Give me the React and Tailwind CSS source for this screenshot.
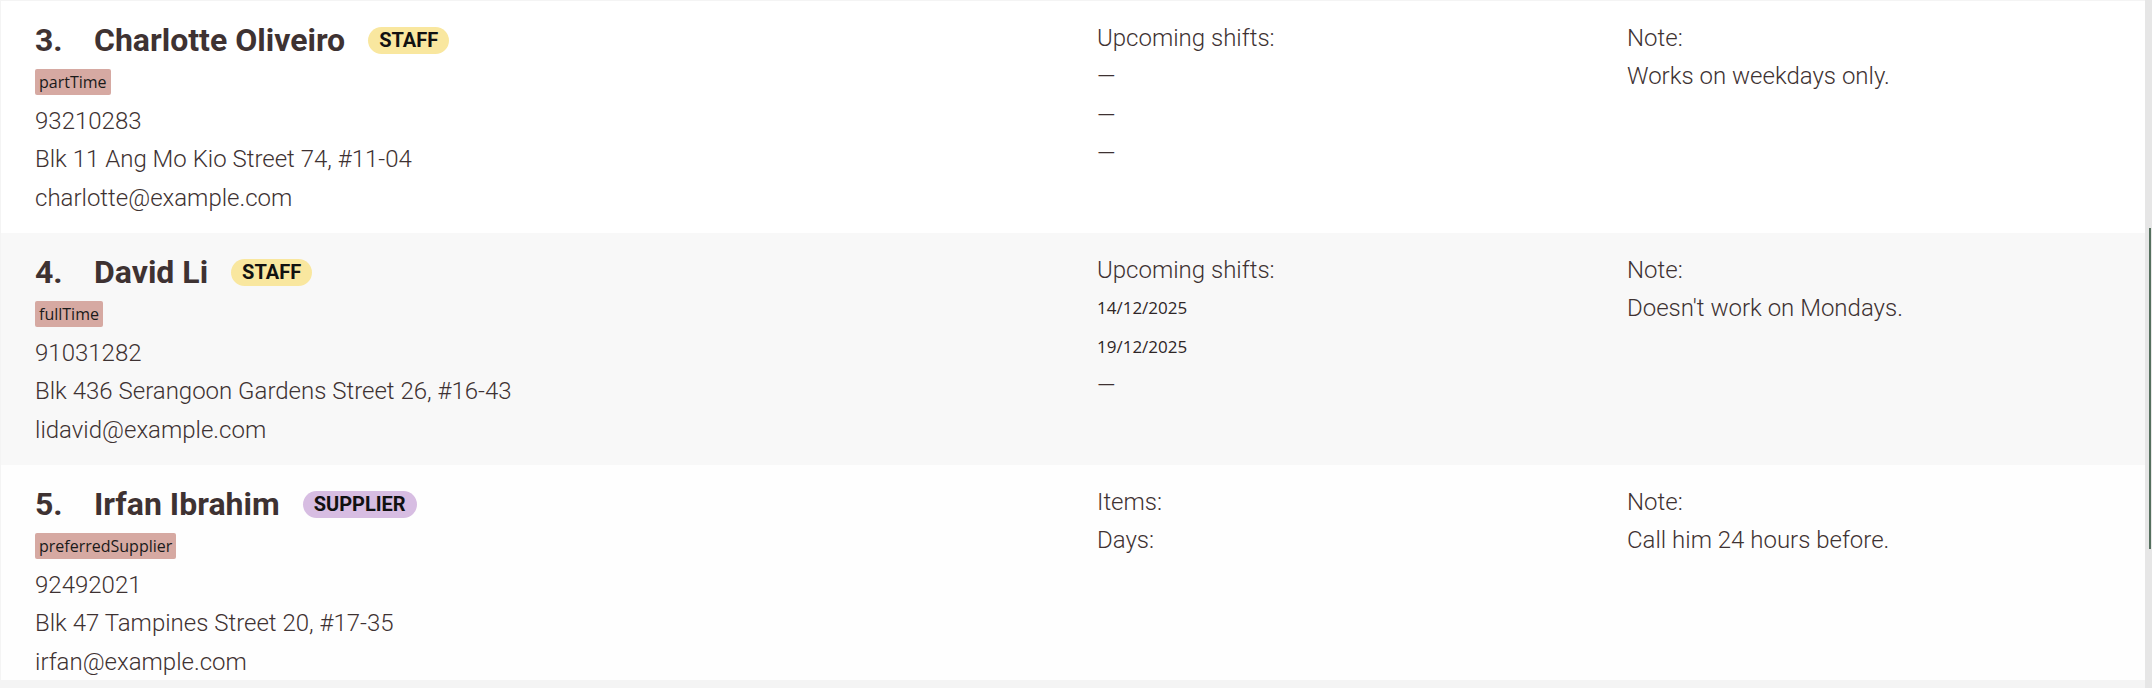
import React from "react";

const people = [
  {
    idx: "3.",
    name: "Charlotte Oliveiro",
    role: "STAFF",
    tag: "partTime",
    phone: "93210283",
    address: "Blk 11 Ang Mo Kio Street 74, #11-04",
    email: "charlotte@example.com",
    kind: "staff",
    shifts: ["—", "—", "—"],
    note: "Works on weekdays only.",
    bg: "bg-[#ffffff]",
  },
  {
    idx: "4.",
    name: "David Li",
    role: "STAFF",
    tag: "fullTime",
    phone: "91031282",
    address: "Blk 436 Serangoon Gardens Street 26, #16-43",
    email: "lidavid@example.com",
    kind: "staff",
    shifts: ["14/12/2025", "19/12/2025", "—"],
    note: "Doesn't work on Mondays.",
    bg: "bg-[#f8f8f8]",
  },
  {
    idx: "5.",
    name: "Irfan Ibrahim",
    role: "SUPPLIER",
    tag: "preferredSupplier",
    phone: "92492021",
    address: "Blk 47 Tampines Street 20, #17-35",
    email: "irfan@example.com",
    kind: "supplier",
    note: "Call him 24 hours before.",
    bg: "bg-[#fefefe]",
  },
];

const roboto = "font-['Roboto',sans-serif]";
const segoe = "font-['Open_Sans',sans-serif]";

function Row({ p }) {
  return (
    <div className={`${p.bg} h-[232px] shrink-0 flex pl-[34px] text-[#3e3232]`}>
      <div className="w-[1062px] shrink-0 flex flex-col pt-[16px]">
        <div className="h-[46px] flex items-center">
          <span className={`${roboto} font-bold text-[32px] w-[59px] shrink-0`}>{p.idx}</span>
          <span className={`${roboto} font-bold text-[32px]`}>{p.name}</span>
          <span
            className={`${roboto} font-bold text-[20px] ml-[23px] h-[27px] px-[11px] rounded-full flex items-center text-[#111111] ${
              p.kind === "staff" ? "bg-[#f9e79f]" : "bg-[#d7bde2]"
            }`}
          >
            {p.role}
          </span>
        </div>
        <div className="mt-[6px] flex">
          <span className={`${segoe} text-[16px] h-[26px] px-[4px] rounded-[2px] bg-[#d6a9a2] text-[#1a1a1a] flex items-center`}>
            {p.tag}
          </span>
        </div>
        <div className={`${roboto} font-light text-[24px] leading-[38.4px] mt-[7px]`}>
          <div>{p.phone}</div>
          <div>{p.address}</div>
          <div>{p.email}</div>
        </div>
      </div>
      <div className={`w-[530px] shrink-0 pt-[18px] ${roboto} font-light text-[24px] leading-[38.4px]`}>
        {p.kind === "staff" ? (
          <>
            <div>Upcoming shifts:</div>
            {p.shifts.map((s, i) =>
              s === "—" ? (
                <div key={i}>—</div>
              ) : (
                <div key={i} className={`${segoe} font-normal text-[17px] text-[#2e2626]`}>
                  {s}
                </div>
              )
            )}
          </>
        ) : (
          <>
            <div>Items:</div>
            <div>Days:</div>
          </>
        )}
      </div>
      <div className={`flex-1 pt-[18px] ${roboto} font-light text-[24px] leading-[38.4px]`}>
        <div>Note:</div>
        <div>{p.note}</div>
      </div>
    </div>
  );
}

export default function App() {
  return (
    <div className="w-[2152px] h-[688px] bg-[#f2f2f2] flex overflow-hidden">
      <div className="flex-1 flex flex-col pt-[1px] pl-[1px] pb-[8px] bg-[#f4f4f4]">
        <div className="flex-1 flex flex-col overflow-hidden">
          {people.map((p) => (
            <Row key={p.idx} p={p} />
          ))}
        </div>
      </div>
      <div className="w-[7px] shrink-0 bg-[#e6e6e6] flex flex-col items-end pr-[1px] pt-[228px]">
        <div className="w-[2px] h-[321px] bg-[#55705e]" />
      </div>
    </div>
  );
}
